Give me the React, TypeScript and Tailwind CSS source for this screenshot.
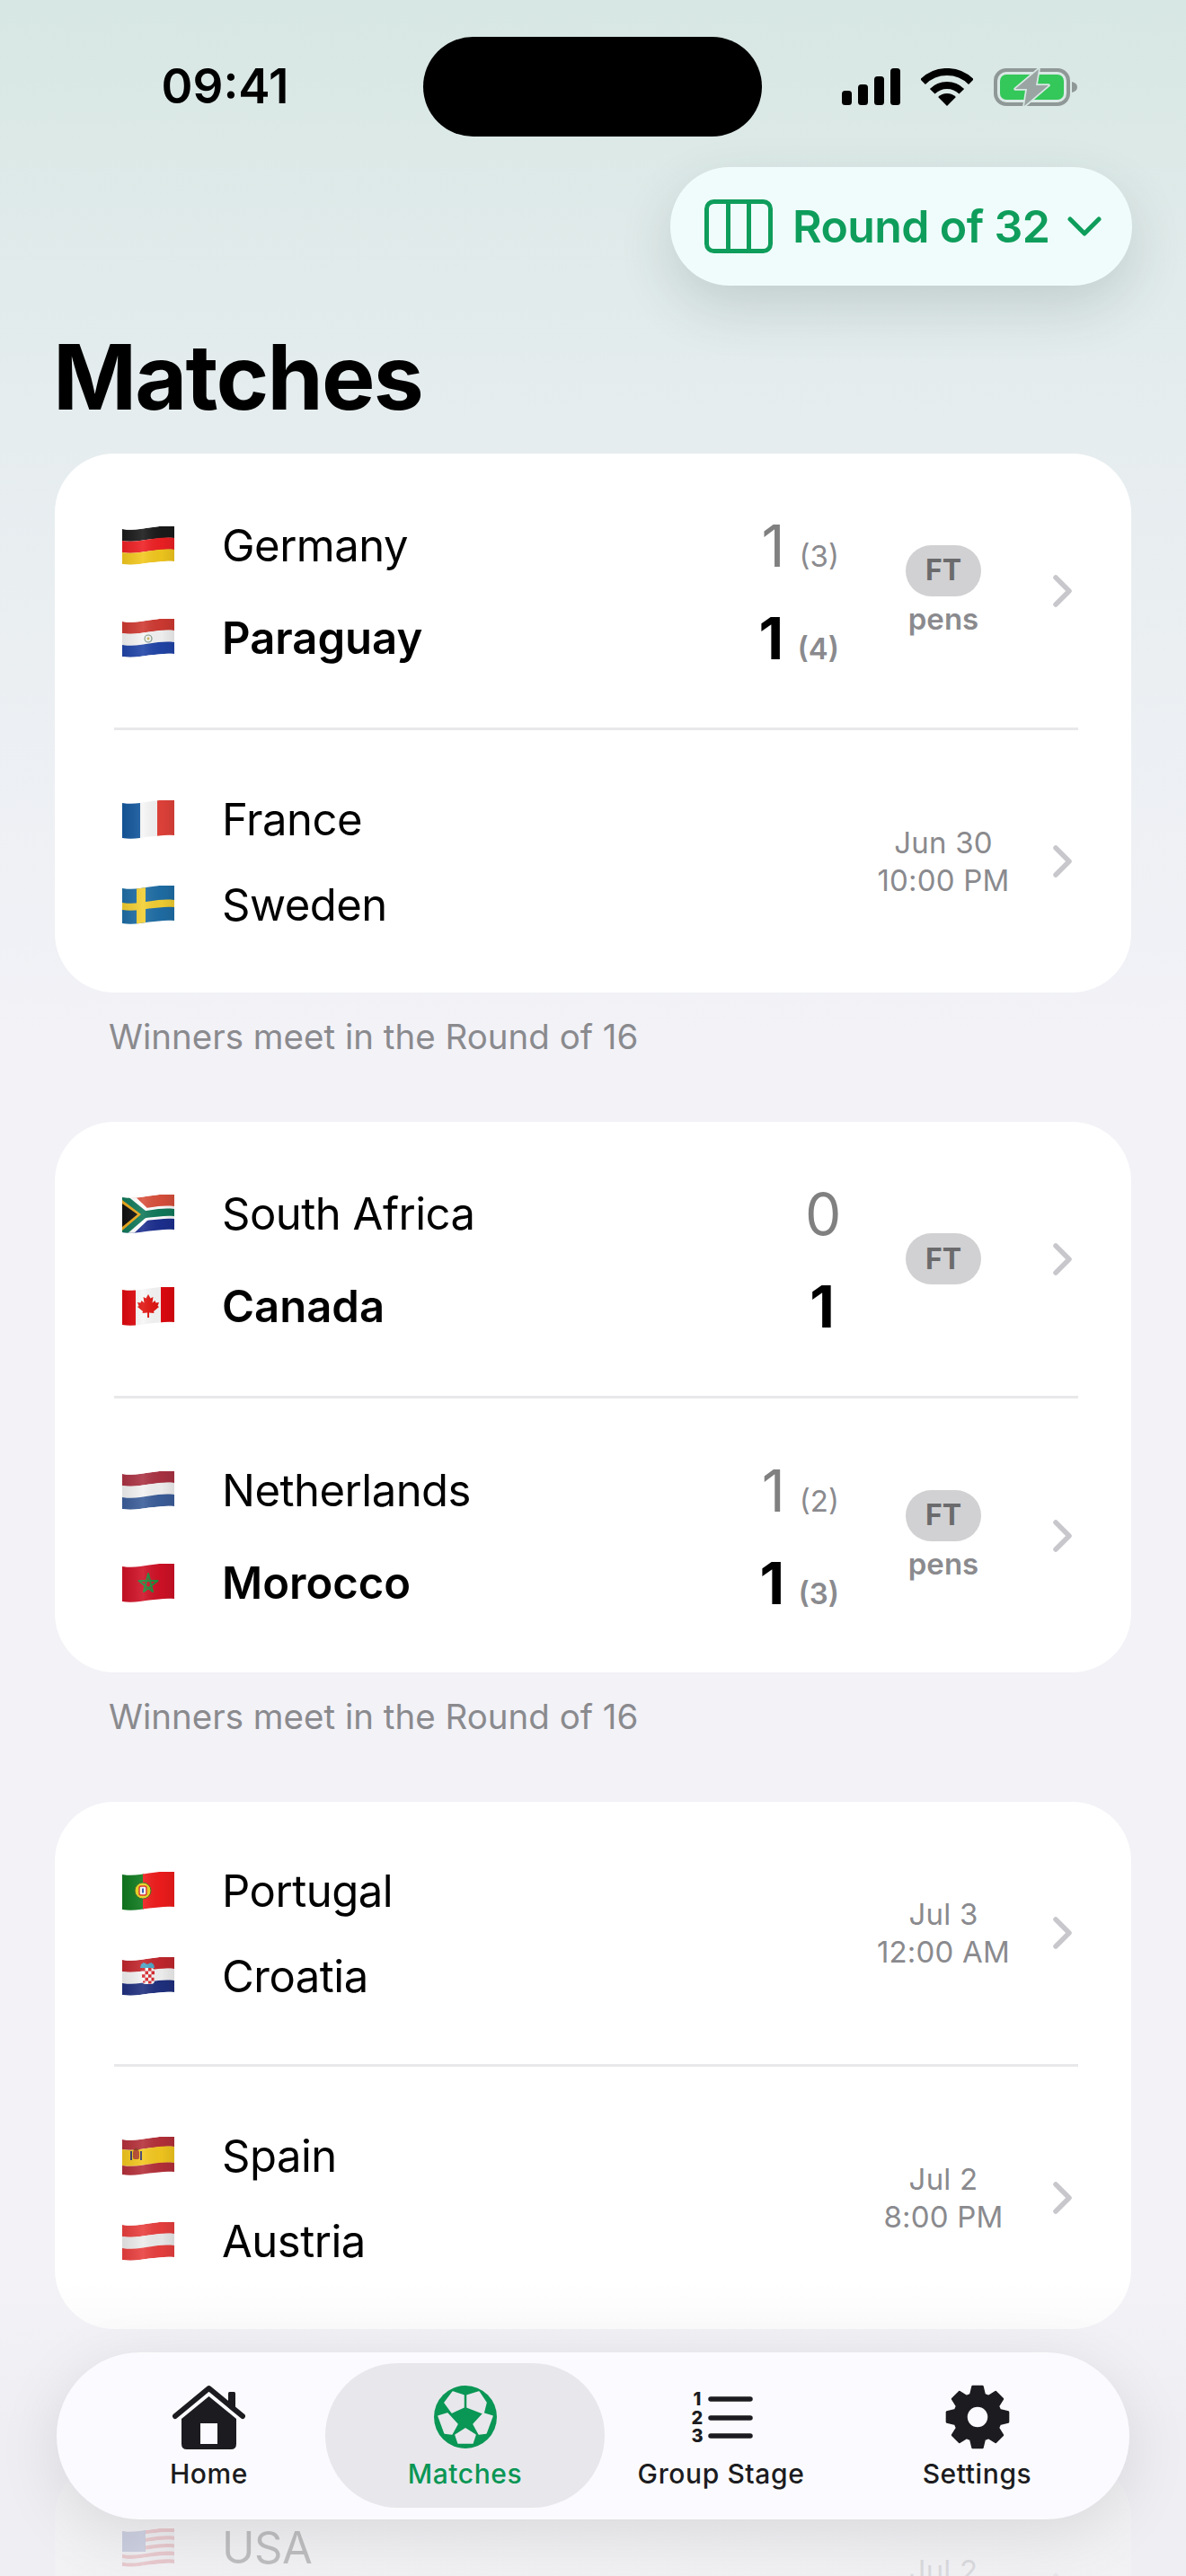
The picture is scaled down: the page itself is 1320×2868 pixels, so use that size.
import { Fragment, type ReactNode } from "react";

// wavy horizontal band, same curve as the flag outline
const band = (a: number, b: number) =>
  `M0 ${a + 3} C12 ${a + 5} 20 ${a + 3} 30 ${a + 1.5} S48 ${a - 1} 58 ${a} L58 ${b} C48 ${b - 1} 40 ${b + 0.5} 30 ${b + 1.5} S12 ${b + 5} 0 ${b + 3} Z`;

const stripes = (cols: string[]) =>
  cols.map((c, i) => (
    <path key={i} d={band((i * 39) / cols.length, ((i + 1) * 39) / cols.length)} fill={c} />
  ));

const flagArt: Record<string, ReactNode> = {
  de: stripes(["#1a1a1a", "#ee2024", "#f2c81e"]),
  py: (
    <>
      {stripes(["#cf3a32", "#f4f4f4", "#2145a8"])}
      <circle cx="29" cy="22" r="4" fill="#f4f4f4" stroke="#7f9a86" strokeWidth="1.2" />
      <circle cx="29" cy="22" r="1.4" fill="#c9b552" />
    </>
  ),
  fr: (
    <>
      <rect width="20" height="44" fill="#14589e" />
      <rect x="20" width="19" height="44" fill="#f5f5f5" />
      <rect x="39" width="19" height="44" fill="#e2423a" />
    </>
  ),
  se: (
    <>
      <rect width="58" height="44" fill="#1f6ea6" />
      <rect x="16" width="10" height="44" fill="#f3cf32" />
      <path d={band(16, 24)} fill="#f3cf32" />
    </>
  ),
  za: (
    <>
      <path d={band(0, 20)} fill="#d9503c" />
      <path d={band(20, 40)} fill="#1c2f8f" />
      <path d="M-2 -2 L10 -2 L30 17 L30 27 L10 46 L-2 46 Z" fill="#fff" />
      <path d={band(13, 27)} fill="#fff" />
      <path d="M-2 1 L5 1 L26 18 L26 26 L5 44 L-2 44 Z" fill="#10795a" />
      <path d={band(16, 24)} fill="#10795a" />
      <path d="M0 6 L21 22 L0 40 Z" fill="#f0aa1c" />
      <path d="M0 10 L17 22 L0 36 Z" fill="#111" />
    </>
  ),
  ca: (
    <>
      <rect width="58" height="44" fill="#f6f6f6" />
      <rect width="15" height="44" fill="#e0090f" />
      <rect x="43" width="15" height="44" fill="#e0090f" />
      <path
        d="M29 8 L31.5 12.5 L34.5 11 L33.5 17.5 L36.5 15 L37.5 17.5 L41 17 L39.5 21 L41 22 L35 27 L35.5 29 L30 28.5 L30 34 L28 34 L28 28.5 L22.5 29 L23 27 L17 22 L18.5 21 L17 17 L20.5 17.5 L21.5 15 L24.5 17.5 L23.5 11 L26.5 12.5 Z"
        fill="#e0140f"
      />
    </>
  ),
  nl: stripes(["#ab3343", "#f2f2f2", "#3b5e9a"]),
  ma: (
    <>
      <rect width="58" height="44" fill="#d01126" />
      <path
        d="M29 11 L34 31 L18.5 19 L39.5 19 L24 31 Z"
        fill="none"
        stroke="#1f8a3a"
        strokeWidth="2"
        strokeLinejoin="round"
      />
    </>
  ),
  pt: (
    <>
      <rect width="24" height="44" fill="#0f7a1e" />
      <rect x="23" width="35" height="44" fill="#f01c1c" />
      <circle cx="23" cy="21" r="9" fill="#e8d31a" stroke="#3a6a1a" strokeWidth="1" />
      <rect x="19" y="16" width="8" height="10" rx="2" fill="#f4f4f4" stroke="#d8261c" strokeWidth="1.4" />
      <rect x="22" y="18.5" width="2" height="5" fill="#2a4da8" />
    </>
  ),
  hr: (
    <>
      {stripes(["#c2272d", "#f2f2f2", "#20307f"])}
      <path d="M21 8 L24 6 L28 8 L32 6 L35 8 L36 12 L20 12 Z" fill="#4aa5c4" />
      <rect x="22" y="12" width="14" height="18" rx="4" fill="#f6f6f6" />
      <path
        d="M22 12h3.5v3.6h-3.5z M29 12h3.5v3.6h-3.5z M25.5 15.6h3.5v3.6h-3.5z M32.5 15.6h3.5v3.6h-3.5z M22 19.2h3.5v3.6h-3.5z M29 19.2h3.5v3.6h-3.5z M25.5 22.8h3.5v3.6h-3.5z M32.5 22.8h3v3.6h-3z M29 26.4h3.5v3h-3.5z M23 26.4h2.5v2h-2.5z"
        fill="#d8262c"
      />
    </>
  ),
  es: (
    <>
      <path d={band(0, 11)} fill="#b5303a" />
      <path d={band(11, 29)} fill="#f3c81f" />
      <path d={band(29, 40)} fill="#b5303a" />
      <rect x="12" y="15" width="7" height="10" rx="2" fill="#b5482a" />
      <rect x="9" y="16" width="2" height="10" fill="#3d3d6a" />
      <rect x="20" y="16" width="2" height="10" fill="#3d3d6a" />
      <path d="M12 15 L15.5 12 L19 15 Z" fill="#8c3a1f" />
    </>
  ),
  at: stripes(["#e9403f", "#ececec", "#e9403f"]),
  us: (
    <>
      {stripes(["#d8363c", "#f4f4f4", "#d8363c", "#f4f4f4", "#d8363c", "#f4f4f4", "#d8363c", "#f4f4f4", "#d8363c"])}
      <rect width="26" height="26" fill="#3c4f9a" />
    </>
  ),
};

function Flag({ code }: { code: string }) {
  return (
    <svg width="58" height="44" viewBox="0 0 58 44" className="shrink-0 block">
      <defs>
        <clipPath id={`clip-${code}`}>
          <path d={band(0, 39)} />
        </clipPath>
        <linearGradient id={`sheen-${code}`} x1="0" x2="1" y1="0" y2="0">
          <stop offset="0" stopColor="#000" stopOpacity="0.08" />
          <stop offset="0.4" stopColor="#fff" stopOpacity="0.1" />
          <stop offset="0.75" stopColor="#000" stopOpacity="0.03" />
          <stop offset="1" stopColor="#000" stopOpacity="0.1" />
        </linearGradient>
      </defs>
      <g clipPath={`url(#clip-${code})`}>
        {flagArt[code]}
        <rect width="58" height="44" fill={`url(#sheen-${code})`} />
      </g>
    </svg>
  );
}

function Chevron() {
  return (
    <svg width="21" height="36" viewBox="0 0 21 36" className="shrink-0">
      <path d="M3 3 L18 18 L3 33" fill="none" stroke="#c7c7cc" strokeWidth="5.5" strokeLinecap="round" strokeLinejoin="round" />
    </svg>
  );
}

type Side = { code?: string; name?: string; score?: number; pens?: number; won?: boolean };
type Match = { home: Side; away: Side; pens?: boolean; date?: string; time?: string };

function TeamLine({ team }: { team: Side }) {
  return (
    <div className="flex items-center h-[62px]">
      {team.code && <Flag code={team.code} />}
      <span className={`ml-[53px] flex-1 text-[49px] text-black ${team.won ? "font-semibold tracking-[0px]" : "font-normal tracking-[-0.5px]"}`}>
        {team.name}
      </span>
      {team.score !== undefined && (
        <div className="flex items-baseline justify-end">
          <span className={`w-[38px] text-center text-[64px] leading-[62px] ${team.won ? "font-bold text-black" : "font-normal text-[#808080]"}`}>
            {team.score}
          </span>
          {team.pens !== undefined && (
            <span className={`ml-[10px] text-[33px] leading-[40px] text-[#8a8a8e] ${team.won ? "font-semibold" : "font-normal"}`}>
              ({team.pens})
            </span>
          )}
        </div>
      )}
    </div>
  );
}

function MatchRow({ match }: { match: Match }) {
  const played = match.home.score !== undefined;
  return (
    <div className={`flex items-center pl-[75px] pr-[66px] ${played ? "h-[305px]" : "h-[292px]"}`}>
      <div className={`flex-1 flex flex-col pt-[3px] ${played ? "gap-[41px]" : "gap-[33px]"}`}>
        <TeamLine team={match.home} />
        <TeamLine team={match.away} />
      </div>
      <div className="w-[170px] ml-[31px] flex flex-col items-center">
        {played ? (
          <>
            <span className="w-[84px] h-[57px] rounded-full bg-[#d1d1d3] flex items-center justify-center text-[32px] font-bold text-[#6b6b6d]">
              FT
            </span>
            {match.pens && <span className="mt-[5px] text-[33px] leading-[40px] font-semibold text-[#8a8a8e]">pens</span>}
          </>
        ) : (
          <div className="text-center text-[33px] leading-[42px] tracking-[0.2px] text-[#8a8a8e]">
            <div>{match.date}</div>
            <div className="min-h-[42px]">{match.time}</div>
          </div>
        )}
      </div>
      <div className="ml-[37px]">
        <Chevron />
      </div>
    </div>
  );
}

const groups: Match[][] = [
  [
    {
      home: { code: "de", name: "Germany", score: 1, pens: 3 },
      away: { code: "py", name: "Paraguay", score: 1, pens: 4, won: true },
      pens: true,
    },
    { home: { code: "fr", name: "France" }, away: { code: "se", name: "Sweden" }, date: "Jun 30", time: "10:00 PM" },
  ],
  [
    {
      home: { code: "za", name: "South Africa", score: 0 },
      away: { code: "ca", name: "Canada", score: 1, won: true },
    },
    {
      home: { code: "nl", name: "Netherlands", score: 1, pens: 2 },
      away: { code: "ma", name: "Morocco", score: 1, pens: 3, won: true },
      pens: true,
    },
  ],
  [
    { home: { code: "pt", name: "Portugal" }, away: { code: "hr", name: "Croatia" }, date: "Jul 3", time: "12:00 AM" },
    { home: { code: "es", name: "Spain" }, away: { code: "at", name: "Austria" }, date: "Jul 2", time: "8:00 PM" },
  ],
  // runs off the bottom of the screen, only its first line shows
  [{ home: { code: "us", name: "USA" }, away: {}, date: "Jul 2" }],
];

function StatusIcons() {
  return (
    <div className="flex items-center">
      <svg width="65" height="41" viewBox="0 0 65 41">
        <rect x="0" y="25" width="11" height="16" rx="3.5" fill="#000" />
        <rect x="18" y="18" width="11" height="23" rx="3.5" fill="#000" />
        <rect x="36" y="9" width="11" height="32" rx="3.5" fill="#000" />
        <rect x="54" y="0" width="11" height="41" rx="3.5" fill="#000" />
      </svg>
      <svg width="58" height="42" viewBox="0 0 58 42" className="ml-[23px]">
        <path d="M2.1 15.1 A38 38 0 0 1 55.9 15.1" fill="none" stroke="#000" strokeWidth="8" />
        <path d="M12.7 25.7 A23 23 0 0 1 45.3 25.7" fill="none" stroke="#000" strokeWidth="8" />
        <path d="M29 42 L19.1 32.1 A14 14 0 0 1 38.9 32.1 Z" fill="#000" />
      </svg>
      <svg width="93" height="44" viewBox="0 0 93 44" className="ml-[23px]">
        <rect x="2" y="3" width="81" height="38" rx="12" fill="none" stroke="#8f9897" strokeWidth="4" />
        <rect x="7" y="8" width="71" height="28" rx="7" fill="#34c759" />
        <path d="M87 16 C91 17 93 19 93 22 C93 25 91 27 87 28 Z" fill="#8f9897" />
        <path d="M50 2 L24 24 H37 L34 43 L61 20 H47 Z" fill="#9aa5a3" stroke="#d8e8e4" strokeWidth="3.5" strokeLinejoin="round" paintOrder="stroke" />
      </svg>
    </div>
  );
}

function HomeIcon() {
  return (
    <svg width="81" height="72" viewBox="0 0 81 72">
      <rect x="62" y="8" width="8" height="18" rx="1.5" fill="#1c1c20" />
      <path d="M3 35 L40.5 4 L78 35" fill="none" stroke="#1c1c20" strokeWidth="6" strokeLinecap="round" strokeLinejoin="round" />
      <path d="M40.5 13 L71 38 V66 Q71 72 65 72 H16 Q10 72 10 66 V38 Z" fill="#1c1c20" />
      <rect x="31" y="43" width="19" height="23" fill="#fbfbff" />
    </svg>
  );
}

function BallIcon() {
  const patches = [
    "12,19 21,7 33,11 33,24 20,30",
    "37,11 50,7 58,19 55,31 37,24",
    "5,34 15,31 26,43 20,54 12,53",
    "65,34 55,31 44,43 50,54 58,53",
    "24,55 35,48 46,55 43,64 27,64",
  ];
  return (
    <svg width="70" height="70" viewBox="0 0 70 70">
      <circle cx="35" cy="35" r="35" fill="#0a9655" />
      {patches.map((p) => (
        <polygon key={p} points={p} fill="#e8e8ec" stroke="#e8e8ec" strokeWidth="1.5" strokeLinejoin="round" />
      ))}
    </svg>
  );
}

function ListIcon() {
  return (
    <svg width="70" height="57" viewBox="0 0 70 57">
      {[8, 29, 49].map((y) => (
        <line key={y} x1="23" x2="67" y1={y} y2={y} stroke="#1c1c20" strokeWidth="5.5" strokeLinecap="round" />
      ))}
      {["1", "2", "3"].map((n, i) => (
        <text key={n} x="8" y={[15, 36, 56][i]} textAnchor="middle" fontSize="20" fontWeight="800" fontFamily="Inter, sans-serif" fill="#1c1c20">
          {n}
        </text>
      ))}
    </svg>
  );
}

function GearIcon() {
  const pts: string[] = [];
  for (let i = 0; i < 8; i++) {
    const c = (i * Math.PI) / 4 - Math.PI / 2;
    const at = (r: number, a: number) =>
      `${(36 + r * Math.cos(c + a)).toFixed(2)} ${(36 + r * Math.sin(c + a)).toFixed(2)}`;
    pts.push(at(26, -0.3), at(34.5, -0.16), at(34.5, 0.16), at(26, 0.3));
  }
  return (
    <svg width="72" height="72" viewBox="0 0 72 72">
      <path
        d={`M${pts.join(" L")} Z M36 23.5 A12.5 12.5 0 1 0 36 48.5 A12.5 12.5 0 1 0 36 23.5 Z`}
        fill="#1c1c20"
        fillRule="evenodd"
        stroke="#1c1c20"
        strokeWidth="2.5"
        strokeLinejoin="round"
      />
    </svg>
  );
}

const tabs = [
  { label: "Home", icon: <HomeIcon /> },
  { label: "Matches", icon: <BallIcon />, active: true },
  { label: "Group Stage", icon: <ListIcon /> },
  { label: "Settings", icon: <GearIcon /> },
];

export default function App() {
  return (
    <div className="relative w-[1320px] h-[2868px] overflow-hidden font-['Inter',sans-serif] bg-[linear-gradient(180deg,#d7e7e3_0,#e6edef_480px,#f2f2f7_1150px)]">
      {/* Status bar */}
      <div className="flex items-center pt-[41px] h-[152px]">
        <div className="w-[471px] flex justify-center pl-[30px] text-[53px] font-semibold text-black">09:41</div>
        <div className="w-[377px] h-[111px] rounded-full bg-black" />
        <div className="pl-[89px]">
          <StatusIcons />
        </div>
      </div>

      {/* Round picker */}
      <div className="flex justify-end pt-[34px] pr-[60px]">
        <button className="h-[132px] w-[514px] rounded-full bg-[#effcfb] shadow-[0_24px_60px_rgba(40,60,60,0.16)] flex items-center pl-[38px] text-[#0f9d5c]">
          <svg width="76" height="60" viewBox="0 0 76 60">
            <rect x="2.5" y="2.5" width="71" height="55" rx="8" fill="none" stroke="#0f9d5c" strokeWidth="5" />
            <line x1="26.5" x2="26.5" y1="3" y2="57" stroke="#0f9d5c" strokeWidth="5" />
            <line x1="49.5" x2="49.5" y1="3" y2="57" stroke="#0f9d5c" strokeWidth="5" />
          </svg>
          <span className="ml-[22px] text-[50px] font-semibold tracking-[-0.6px]">Round of 32</span>
          <svg width="38" height="22" viewBox="0 0 38 22" className="ml-[20px]">
            <path d="M3 3 L19 19 L35 3" fill="none" stroke="#0f9d5c" strokeWidth="5" strokeLinecap="round" strokeLinejoin="round" />
          </svg>
        </button>
      </div>

      <h1 className="mt-[47px] mb-[30px] pl-[59px] text-[100px] leading-[110px] font-bold tracking-[-1.8px] text-black">Matches</h1>

      {/* Match cards */}
      <div className="px-[61px]">
        {groups.map((group, i) => (
          <Fragment key={i}>
            <div className="bg-white rounded-[66px]">
              {group.map((m, j) => (
                <Fragment key={j}>
                  {j > 0 && <div className="h-[3px] ml-[66px] mr-[59px] bg-[#e8e8ea]" />}
                  <MatchRow match={m} />
                </Fragment>
              ))}
            </div>
            <div className="h-[144px] pt-[29px] pl-[60px] text-[38.5px] leading-[40px] text-[#8a8a8e]">Winners meet in the Round of 16</div>
          </Fragment>
        ))}
      </div>

      {/* Fade behind the tab bar */}
      <div className="absolute inset-x-0 bottom-0 h-[328px] bg-linear-to-b from-[#eeeef200] to-[#eeeef2cc] to-50%" />

      {/* Tab bar */}
      <div className="absolute left-[63px] top-[2619px] w-[1194px] h-[186px] rounded-full bg-[#fbfbff] shadow-[0_16px_70px_rgba(0,0,0,0.1)] px-[27px] grid grid-cols-4">
        {tabs.map((t) => (
          <div key={t.label} className="relative flex flex-col items-center justify-start">
            {t.active && <div className="absolute -inset-x-[13px] top-[12px] h-[161px] rounded-full bg-[#e8e8ec]" />}
            <div className="relative h-[72px] mt-[36px] flex items-center justify-center">{t.icon}</div>
            <span className={`relative mt-[9px] text-[30px] leading-[36px] font-medium tracking-[0.6px] ${t.active ? "text-[#0a9655]" : "text-[#1c1c20]"}`}>
              {t.label}
            </span>
          </div>
        ))}
      </div>
    </div>
  );
}
